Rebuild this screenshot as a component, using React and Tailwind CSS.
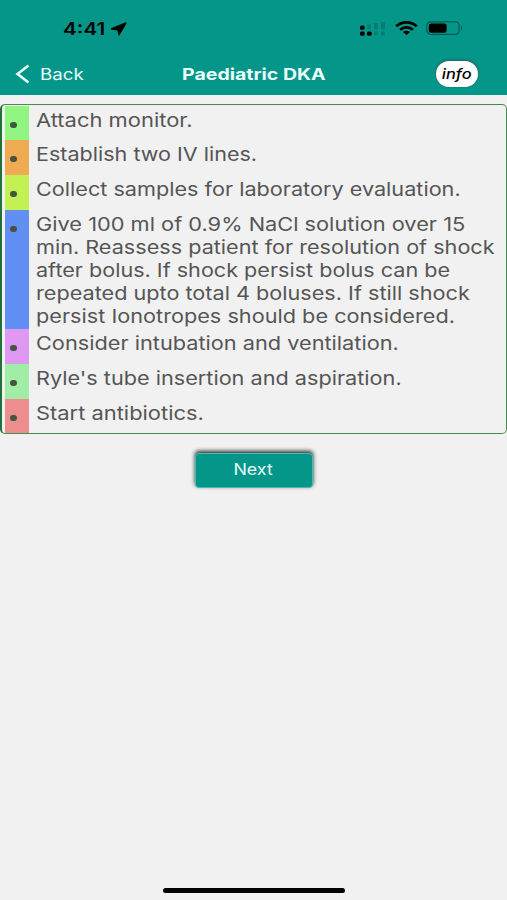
import React from 'react';

const steps = [
  { color: 'bg-[#90f581]', height: 'h-[34px]', lines: [{ text: 'Attach monitor.', scale: 'scale-x-[1.185]' }] },
  { color: 'bg-[#efab52]', height: 'h-[35px]', lines: [{ text: 'Establish two IV lines.', scale: 'scale-x-[1.165]' }] },
  { color: 'bg-[#c3f053]', height: 'h-[35px]', lines: [{ text: 'Collect samples for laboratory evaluation.', scale: 'scale-x-[1.17]' }] },
  {
    color: 'bg-[#628ff3]',
    height: 'h-[119px]',
    lines: [
      { text: 'Give 100 ml of 0.9% NaCl solution over 15', scale: 'scale-x-[1.177]' },
      { text: 'min. Reassess patient for resolution of shock', scale: 'scale-x-[1.169]' },
      { text: 'after bolus. If shock persist bolus can be', scale: 'scale-x-[1.167]' },
      { text: 'repeated upto total 4 boluses. If still shock', scale: 'scale-x-[1.17]' },
      { text: 'persist Ionotropes should be considered.', scale: 'scale-x-[1.172]' },
    ],
  },
  { color: 'bg-[#df99f2]', height: 'h-[35px]', lines: [{ text: 'Consider intubation and ventilation.', scale: 'scale-x-[1.174]' }] },
  { color: 'bg-[#a0eea5]', height: 'h-[35px]', lines: [{ text: "Ryle's tube insertion and aspiration.", scale: 'scale-x-[1.171]' }] },
  { color: 'bg-[#ec8e8d]', height: 'h-[34px]', lines: [{ text: 'Start antibiotics.', scale: 'scale-x-[1.183]' }] },
];

const StatusBar = () => (
  <div className="flex h-[52px] items-start pt-[18px] text-black">
    <span className="ml-[63px] w-[47px] whitespace-nowrap text-[17px] font-semibold leading-[22px]">
      <span className="inline-block origin-left scale-x-[1.22]">4:41</span>
    </span>
    <svg className="mt-[4px] h-[14px] w-[17px]" viewBox="0 0 17 14">
      <path
        d="M15.8 1 1.5 6.9 8.2 7.6 9 12.6Z"
        fill="currentColor"
        stroke="currentColor"
        strokeWidth="1.6"
        strokeLinejoin="round"
      />
    </svg>
    <svg className="ml-[232px] mt-[3px] h-[16px] w-[28px]" viewBox="0 0 28 16">
      <g fill="currentColor">
        <rect x="1" y="4.5" width="4.6" height="4.3" rx="1.5" />
        <rect x="1" y="10.6" width="4.6" height="4.2" rx="1.5" />
        <rect x="8" y="10.6" width="4.6" height="4.2" rx="1.5" />
      </g>
      <g fill="currentColor" opacity=".16">
        <rect x="8" y="3.5" width="4" height="5" rx="1" />
        <rect x="15" y="2" width="4" height="6.5" rx="1" />
        <rect x="22" y="1" width="4" height="7.5" rx="1" />
        <rect x="15" y="10.6" width="4" height="4" rx="1" />
        <rect x="22" y="10.6" width="4" height="4" rx="1" />
      </g>
    </svg>
    <svg className="ml-[8px] mt-[3px] h-[14px] w-[23px]" viewBox="0 0 23 14">
      <g fill="none" stroke="currentColor" strokeWidth="2.8">
        <path d="M1.2 5.3C7-.1 16-.1 21.8 5.3" />
        <path d="M5.1 8.8C8.8 5.6 14.2 5.6 17.9 8.8" />
      </g>
      <path d="M7.9 11Q11.5 8.4 15.1 11L11.5 14Z" fill="currentColor" />
    </svg>
    <svg className="ml-[8px] mt-[3px] h-[15px] w-[37px]" viewBox="0 0 37 15">
      <rect x=".8" y=".8" width="32.4" height="12.6" rx="4" fill="none" stroke="currentColor" strokeWidth="1.2" opacity=".4" />
      <rect x="2.8" y="2.6" width="17.8" height="9.2" rx="2.5" fill="currentColor" />
      <path d="M35 5q2 2.2 0 4.4Z" fill="currentColor" opacity=".5" />
    </svg>
  </div>
);

const NavBar = () => (
  <div className="grid h-[43px] grid-cols-[170px_1fr_170px] items-center text-[#e8fffb]">
    <button className="flex items-center pl-[15px] text-left">
      <svg className="h-[20px] w-[15px]" viewBox="0 0 15 20">
        <path d="M13.5 1.5 2.5 10 13.5 18.5" fill="none" stroke="currentColor" strokeWidth="2.5" />
      </svg>
      <span className="ml-[10px] origin-left scale-x-[1.17] text-[16px] leading-5">Back</span>
    </button>
    <h1 className="whitespace-nowrap text-center text-[16px] font-bold leading-5">
      <span className="inline-block scale-x-[1.22]">Paediatric DKA</span>
    </h1>
    <button className="ml-[99px] flex h-[26px] w-[42px] items-center justify-center rounded-full bg-white text-[14px] font-medium italic text-black shadow-[0_-1px_3px_0px_rgba(65,70,70,0.8)]">
      <span className="scale-x-[1.17]">info</span>
    </button>
  </div>
);

const App = () => {
  return (
    <div className="flex h-[900px] w-[507px] flex-col overflow-hidden bg-[#f1f1f1] font-['Inter','Liberation_Sans',sans-serif]">
      <header className="h-[95px] shrink-0 bg-[#05968a]">
        <StatusBar />
        <NavBar />
      </header>

      <ul className="mt-[9px] rounded-[5px] border border-l-2 border-[#468c51] border-l-[#22713a] pl-[3px] pt-px">
        {steps.map((step) => (
          <li key={step.lines[0].text} className={`flex ${step.height}`}>
            <div className={`w-[24px] shrink-0 pl-[4.5px] pt-[16px] ${step.color}`}>
              <div className="h-[6px] w-[7px] rounded-full bg-[#44543f]" />
            </div>
            <div className="pl-[7px] pt-[3px] text-[18.5px] leading-[23px] text-[#555555]">
              {step.lines.map((line) => (
                <div key={line.text} className={`w-max origin-left whitespace-nowrap ${line.scale}`}>
                  {line.text}
                </div>
              ))}
            </div>
          </li>
        ))}
      </ul>

      <button className="mx-auto mt-[19px] flex h-[35px] w-[118px] items-center justify-center rounded-[4px] border border-[#47bcae] bg-[#05968a] pb-px text-[15.5px] text-[#e8fffb] shadow-[0_-2px_4px_0px_rgba(30,35,35,0.95)]">
        <span className="scale-x-[1.15]">Next</span>
      </button>

      <div className="mx-auto mb-[7px] mt-auto h-[5px] w-[182px] shrink-0 rounded-full bg-black" />
    </div>
  );
};

export default App;
